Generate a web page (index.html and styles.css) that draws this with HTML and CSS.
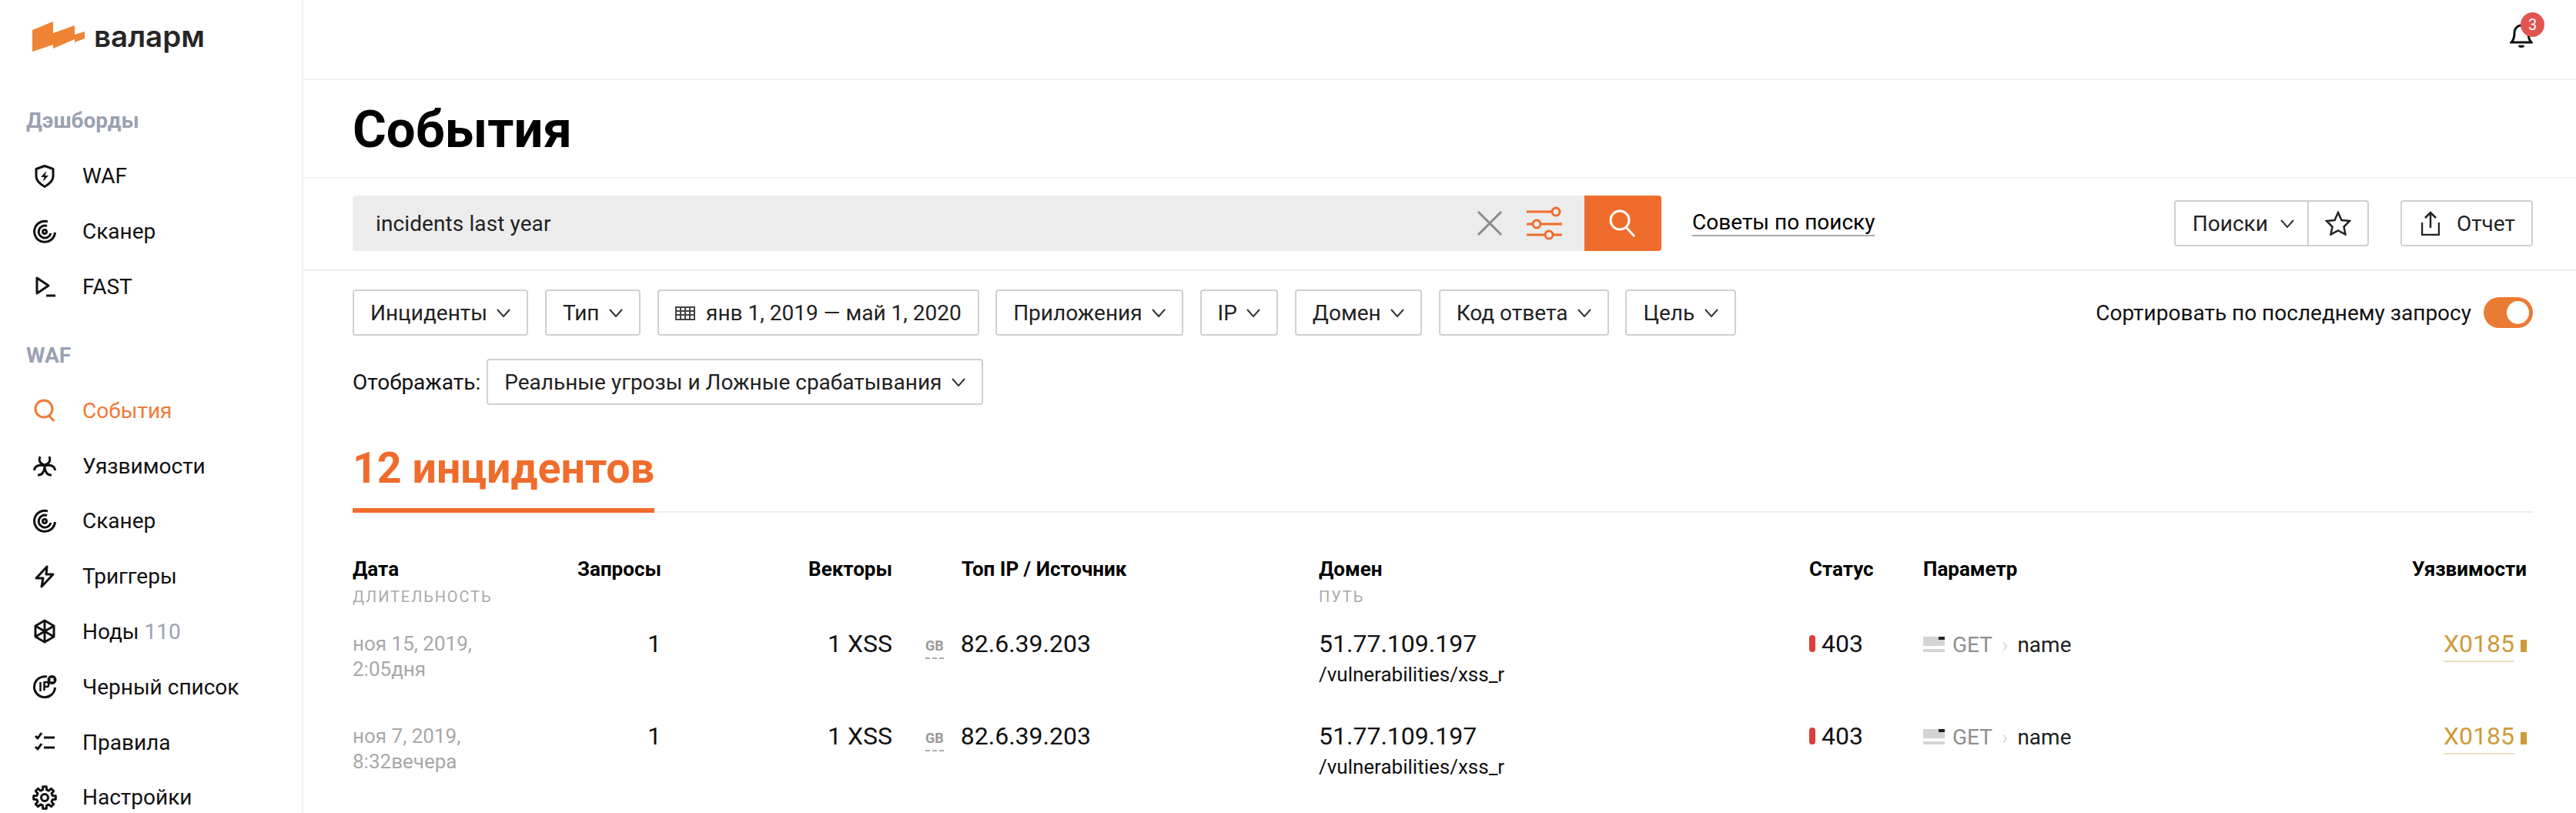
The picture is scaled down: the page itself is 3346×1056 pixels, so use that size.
FILE: index.html
```html
<!DOCTYPE html>
<html lang="ru">
<head>
    <meta charset="UTF-8">
    <title>События</title>
    <link rel="stylesheet" href="styles.css">
</head>
<body>
    <aside class="sidebar">
        <div class="logo">
            <svg class="logo-mark" width="68" height="39" viewBox="0 0 68 39"><path d="M0 11 27 0V15L55 5V17L68 13V22L55 27V23L27 35V30L0 39Z" fill="#ee8434"/></svg>
            <span class="logo-text">валарм</span>
        </div>

        <div class="nav-title nav-title-first">Дэшборды</div>
        <a class="nav-item">
            <svg class="nav-icon" viewBox="0 0 32 32"><path d="M16 2.500 27 6.500V16C27 22 22 26 16 29.500 10 26 5 22 5 16V6.500Z"/><path class="solid" d="M18.500 9 11 17H15.500L13.500 23 21 15H16.500Z"/></svg>
            <span>WAF</span>
        </a>
        <a class="nav-item">
            <svg class="nav-icon" viewBox="0 0 32 32"><path d="M20 2.900A13.500 13.500 0 1 0 29.500 17"/><path d="M24 18A8 8 0 1 1 19 8.500"/><circle cx="16" cy="16" r="2.500"/></svg>
            <span>Сканер</span>
        </a>
        <a class="nav-item">
            <svg class="nav-icon" viewBox="0 0 32 32"><path d="M6 5V25L21 15Z"/><path d="M18 28H30"/></svg>
            <span>FAST</span>
        </a>

        <div class="nav-title">WAF</div>
        <a class="nav-item active">
            <svg class="nav-icon" viewBox="0 0 32 32"><circle cx="15" cy="14" r="11"/><path d="M22 23 28 30"/></svg>
            <span>События</span>
        </a>
        <a class="nav-item">
            <svg class="nav-icon" viewBox="0 0 32 32"><path d="M10 4C8 9 10 14 16 15 22 14 24 9 22 4"/><path d="M2.500 22C3 16 9 14 16 16 23 14 29 16 29.500 22"/><path d="M7 28C12 28.500 15 25 16 18 17 25 20 28.500 25 28"/></svg>
            <span>Уязвимости</span>
        </a>
        <a class="nav-item">
            <svg class="nav-icon" viewBox="0 0 32 32"><path d="M20 2.900A13.500 13.500 0 1 0 29.500 17"/><path d="M24 18A8 8 0 1 1 19 8.500"/><circle cx="16" cy="16" r="2.500"/></svg>
            <span>Сканер</span>
        </a>
        <a class="nav-item">
            <svg class="nav-icon" viewBox="0 0 32 32"><path d="M19 3 5 18H14L12 29 27 13H18Z"/></svg>
            <span>Триггеры</span>
        </a>
        <a class="nav-item">
            <svg class="nav-icon" viewBox="0 0 32 32"><path d="M16 2 28 9V23L16 30 4 23V9Z"/><path d="M16 2V30M4 9 28 23M28 9 4 23"/></svg>
            <span>Ноды <span class="nav-count">110</span></span>
        </a>
        <a class="nav-item">
            <svg class="nav-icon" viewBox="0 0 32 32"><path d="M19 3A13.500 13.500 0 1 0 29.500 17"/><path class="thin" d="M10.500 10V22M15.500 21V10H19C22 10 22 16 19 16H15.500"/><circle class="solid" cx="25.500" cy="7" r="6"/><path class="cross" d="M23.500 5 27.500 9M27.500 5 23.500 9"/></svg>
            <span>Черный список</span>
        </a>
        <a class="nav-item">
            <svg class="nav-icon" viewBox="0 0 32 32"><path d="M4 8 7 11 12 4M4 22 7 25 12 18M15 10H29M15 23H29"/></svg>
            <span>Правила</span>
        </a>
        <a class="nav-item">
            <svg class="nav-icon" viewBox="0 0 32 32"><circle cx="16" cy="16" r="4.500"/><path d="M13.460 5.810 13.730 1.680H18.270L18.540 5.810 21.410 7 24.520 4.270 27.730 7.480 25 10.590 26.190 13.460 30.320 13.730V18.270L26.190 18.540 25 21.410 27.730 24.520 24.520 27.730 21.410 25 18.540 26.190 18.270 30.320H13.730L13.460 26.190 10.590 25 7.480 27.730 4.270 24.520 7 21.410 5.810 18.540 1.680 18.270V13.730L5.810 13.460 7 10.590 4.270 7.480 7.480 4.270 10.590 7Z"/></svg>
            <span>Настройки</span>
        </a>
    </aside>

    <main class="main">
        <header class="topbar">
            <div class="bell">
                <svg width="30" height="32" viewBox="0 0 30 32" fill="none" stroke="#111" stroke-width="3"><path d="M2 25C6 21 6 17 6 13 6 7 10 3 15 3 20 3 24 7 24 13 24 17 24 21 28 25Z"/><path d="M12 29C13 31 17 31 18 29"/></svg>
                <span class="bell-badge">3</span>
            </div>
        </header>

        <div class="title-row">
            <h1 class="page-title">События</h1>
        </div>

        <div class="search-row">
            <div class="search">
                <span class="search-text">incidents last year</span>
                <svg class="search-clear" width="34" height="34" viewBox="0 0 34 34"><path d="M2 2 32 32M32 2 2 32" stroke="#8a8a8a" stroke-width="3"/></svg>
                <svg class="search-sliders" width="46" height="44" viewBox="0 0 46 44" fill="#ececec" stroke="#f06c2c" stroke-width="3"><path d="M0 7H32M0 23H8M18 23H46M0 37H24M34 37H46"/><circle cx="38" cy="7" r="5"/><circle cx="13" cy="23" r="5"/><circle cx="29" cy="37" r="5"/></svg>
                <button class="search-btn">
                    <svg width="38" height="36" viewBox="0 0 38 36" fill="none" stroke="#fff" stroke-width="3"><circle cx="15" cy="14" r="12"/><path d="M23 23 34 35"/></svg>
                </button>
            </div>
            <a class="search-tips">Советы по поиску</a>
            <div class="search-actions">
                <div class="btn-group">
                    <button class="btn btn-searches">Поиски <svg class="chevron" width="18" height="11" viewBox="0 0 18 11"><path d="M1 1 9 10 17 1"/></svg></button>
                    <button class="btn btn-star">
                        <svg width="34" height="32" viewBox="0 0 34 32" fill="none" stroke="#222" stroke-width="2.500"><path d="M17 2 21.500 12 32 13 24.500 20.500 26.500 30.500 17 25.500 7.500 30.500 9.500 20.500 2 13 12.500 12Z"/></svg>
                    </button>
                </div>
                <button class="btn btn-report">
                    <svg width="24" height="32" viewBox="0 0 24 32" fill="none" stroke="#222" stroke-width="2.500"><path d="M12 22V2M5 9 12 2 19 9M1 15V31H23V15"/></svg>
                    Отчет
                </button>
            </div>
        </div>

        <div class="filters">
            <div class="filter-line">
                <button class="btn">Инциденты <svg class="chevron" width="18" height="11" viewBox="0 0 18 11"><path d="M1 1 9 10 17 1"/></svg></button>
                <button class="btn">Тип <svg class="chevron" width="18" height="11" viewBox="0 0 18 11"><path d="M1 1 9 10 17 1"/></svg></button>
                <button class="btn">
                    <svg class="cal" width="26" height="20" viewBox="0 0 26 20" fill="none" stroke="#444" stroke-width="2"><path d="M1 3H25V19H1ZM1 8H25M1 13H25M7 3V19M13 3V19M19 3V19"/></svg>
                    янв 1, 2019 — май 1, 2020
                </button>
                <button class="btn">Приложения <svg class="chevron" width="18" height="11" viewBox="0 0 18 11"><path d="M1 1 9 10 17 1"/></svg></button>
                <button class="btn">IP <svg class="chevron" width="18" height="11" viewBox="0 0 18 11"><path d="M1 1 9 10 17 1"/></svg></button>
                <button class="btn">Домен <svg class="chevron" width="18" height="11" viewBox="0 0 18 11"><path d="M1 1 9 10 17 1"/></svg></button>
                <button class="btn">Код ответа <svg class="chevron" width="18" height="11" viewBox="0 0 18 11"><path d="M1 1 9 10 17 1"/></svg></button>
                <button class="btn">Цель <svg class="chevron" width="18" height="11" viewBox="0 0 18 11"><path d="M1 1 9 10 17 1"/></svg></button>
                <div class="sort">
                    Сортировать по последнему запросу
                    <span class="toggle"><span class="toggle-knob"></span></span>
                </div>
            </div>
            <div class="filter-line filter-show">
                <span class="show-label">Отображать:</span>
                <button class="btn">Реальные угрозы и Ложные срабатывания <svg class="chevron" width="18" height="11" viewBox="0 0 18 11"><path d="M1 1 9 10 17 1"/></svg></button>
            </div>
        </div>

        <div class="tabs">
            <div class="tab">12 инцидентов</div>
        </div>

        <div class="table">
            <div class="row head">
                <div><b>Дата</b><small>ДЛИТЕЛЬНОСТЬ</small></div>
                <div class="right"><b>Запросы</b></div>
                <div class="right"><b>Векторы</b></div>
                <div class="ip-head"><b>Топ IP / Источник</b></div>
                <div><b>Домен</b><small>ПУТЬ</small></div>
                <div><b>Статус</b></div>
                <div><b>Параметр</b></div>
                <div class="right"><b>Уязвимости</b></div>
            </div>

            <div class="row">
                <div class="date">ноя 15, 2019,<br>2:05дня</div>
                <div class="right big">1</div>
                <div class="right big">1 XSS</div>
                <div class="source"><span class="country">GB</span><span class="big">82.6.39.203</span></div>
                <div><div class="big">51.77.109.197</div><div class="path">/vulnerabilities/xss_r</div></div>
                <div class="status big">403</div>
                <div class="param"><span class="flag"><i></i></span><span class="method">GET</span><span class="arrow">›</span><span>name</span></div>
                <div class="right"><span class="vuln">X0185</span><span class="vuln-bar"></span></div>
            </div>

            <div class="row">
                <div class="date">ноя 7, 2019,<br>8:32вечера</div>
                <div class="right big">1</div>
                <div class="right big">1 XSS</div>
                <div class="source"><span class="country">GB</span><span class="big">82.6.39.203</span></div>
                <div><div class="big">51.77.109.197</div><div class="path">/vulnerabilities/xss_r</div></div>
                <div class="status big">403</div>
                <div class="param"><span class="flag"><i></i></span><span class="method">GET</span><span class="arrow">›</span><span>name</span></div>
                <div class="right"><span class="vuln">X0185</span><span class="vuln-bar"></span></div>
            </div>
        </div>
    </main>
</body>
</html>
```

FILE: styles.css
```css
* {
    box-sizing: border-box;
}

body {
    margin: 0;
    height: 100vh;
    overflow: hidden;
    display: flex;
    background: #fff;
    color: #111;
    font-family: Roboto, sans-serif;
    font-size: 28px;
}

/* sidebar */
.sidebar {
    width: 394px;
    flex-shrink: 0;
    border-right: 2px solid #f2f2f2;
    overflow: hidden;
}

.logo {
    display: flex;
    align-items: center;
    height: 94px;
    padding-left: 42px;
    gap: 12px;
}

.logo-text {
    font-family: Inter, sans-serif;
    font-size: 38.500px;
    font-weight: 600;
    color: #262626;
    line-height: 1;
}

.nav-title {
    padding-left: 34px;
    height: 40px;
    margin-top: 34px;
    margin-bottom: 15px;
    line-height: 40px;
    font-weight: 700;
    color: #9aa1b1;
}

.nav-title-first {
    margin-top: 43px;
    margin-bottom: 16px;
}

.nav-item {
    display: flex;
    align-items: center;
    height: 71.800px;
    padding-left: 42px;
    color: #111;
}

.nav-item.active {
    color: #f07a35;
}

.nav-icon {
    width: 32px;
    height: 32px;
    margin-right: 33px;
    flex-shrink: 0;
    fill: none;
    stroke: currentColor;
    stroke-width: 3;
    stroke-linejoin: round;
}

.nav-icon .thin {
    stroke-width: 2.500;
}

.nav-icon .solid {
    fill: currentColor;
    stroke: none;
}

.nav-icon .cross {
    stroke: #fff;
    stroke-width: 2;
}

.nav-count {
    color: #9aa1b1;
}

/* main column */
.main {
    flex: 1;
    min-width: 0;
}

.topbar {
    height: 104px;
    border-bottom: 2px solid #f2f2f2;
    display: flex;
    justify-content: flex-end;
    padding: 30px 56px 0 0;
}

.bell {
    position: relative;
    width: 30px;
    height: 32px;
}

.bell-badge {
    position: absolute;
    top: -14px;
    left: 14px;
    width: 31px;
    height: 32px;
    border-radius: 50%;
    background: #e25450;
    color: #fff;
    font-size: 20px;
    line-height: 32px;
    text-align: center;
}

.title-row {
    height: 128px;
    border-bottom: 2px solid #f2f2f2;
    padding: 2px 0 0 64px;
    display: flex;
    align-items: center;
}

.page-title {
    margin: 0;
    font-size: 67px;
    font-weight: 700;
    color: #000;
}

.search-row {
    height: 120px;
    border-bottom: 2px solid #f0eeec;
    padding: 22px 56px 0 64px;
    display: flex;
    align-items: flex-start;
}

.search {
    width: 1700px;
    height: 72px;
    background: #ececec;
    border-radius: 4px;
    display: flex;
    align-items: center;
    padding-left: 30px;
    overflow: hidden;
}

.search-text {
    flex: 1;
    font-size: 28px;
    letter-spacing: 0.100px;
    color: #222;
}

.search-clear {
    margin-right: 31px;
}

.search-sliders {
    margin-right: 29px;
}

.search-btn {
    width: 100px;
    height: 72px;
    border: none;
    background: #f06c2c;
    display: flex;
    align-items: center;
    justify-content: center;
}

.search-tips {
    margin: 18px 0 0 40px;
    height: 35px;
    line-height: 33px;
    border-bottom: 2px solid #aaa;
    color: #000;
}

.search-actions {
    margin-left: auto;
    margin-top: 6px;
    display: flex;
    gap: 41px;
}

.btn-group {
    display: flex;
}

.btn {
    height: 60px;
    padding: 0 21px;
    display: flex;
    align-items: center;
    gap: 12.500px;
    background: #fff;
    border: 2px solid #d0d0d0;
    border-radius: 4px;
    font-family: inherit;
    font-size: 28px;
    color: #222;
    white-space: nowrap;
}

.btn-searches {
    border-radius: 4px 0 0 4px;
    border-right: none;
    padding: 0 17px 0 22px;
    gap: 16px;
}

.btn-star {
    border-radius: 0 4px 4px 0;
    padding: 0 21px;
}

.btn-report {
    padding: 0 21px 0 25px;
    gap: 22px;
}

.chevron {
    fill: none;
    stroke: #333;
    stroke-width: 2;
}

.cal {
    margin-right: 2px;
}

/* filters */
.filters {
    padding: 24px 56px 0 64px;
}

.filter-line {
    display: flex;
    align-items: center;
    gap: 21.500px;
}

.filter-show {
    margin-top: 30px;
    gap: 8px;
}

.sort {
    margin-left: auto;
    display: flex;
    align-items: center;
    gap: 16px;
    color: #111;
    white-space: nowrap;
}

.toggle {
    width: 64px;
    height: 40px;
    border-radius: 20px;
    background: #ea7b33;
    display: flex;
    justify-content: flex-end;
    align-items: center;
    padding-right: 5px;
}

.toggle-knob {
    width: 29px;
    height: 30px;
    border-radius: 50%;
    background: #fff;
}

/* counter tab */
.tabs {
    margin: 30px 56px 0 64px;
    border-bottom: 2px solid #f0eeec;
    height: 110px;
    display: flex;
    align-items: flex-end;
}

.tab {
    height: 116px;
    margin-bottom: -2px;
    padding-top: 26px;
    border-bottom: 6px solid #f06c2c;
    font-size: 55.500px;
    font-weight: 700;
    color: #f06c2c;
    line-height: 66px;
}

/* table */
.table {
    padding: 58px 64px 0 64px;
}

.row {
    display: grid;
    grid-template-columns: 242px 159px 300px 554px 637px 148px 1fr 300px;
    height: 120px;
    color: #111;
}

.row.head {
    height: 92px;
    font-size: 26px;
    color: #000;
}

.head b {
    display: block;
    font-weight: 700;
    line-height: 30px;
}

.head small {
    display: block;
    margin-top: 8px;
    font-size: 20px;
    letter-spacing: 1.900px;
    line-height: 26px;
    color: #aaa;
}

.right {
    text-align: right;
}

.ip-head {
    padding-left: 90px;
}

.big {
    font-size: 32px;
    line-height: 40px;
}

.date {
    font-size: 26px;
    line-height: 33px;
    color: #a8a8a8;
    padding-top: 4px;
}

.source {
    padding-left: 43px;
    display: flex;
    align-items: flex-start;
    gap: 22px;
}

.country {
    font-size: 18px;
    font-weight: 700;
    color: #999;
    line-height: 22px;
    padding-bottom: 4px;
    margin-top: 12px;
    border-bottom: 2px dashed #aaa;
}

.path {
    font-size: 26px;
    line-height: 34px;
    margin-top: 3px;
}

.status {
    display: flex;
    gap: 8px;
}

.status::before {
    content: "";
    width: 8px;
    height: 22px;
    margin-top: 9px;
    border-radius: 4px;
    background: #de3f3b;
}

.param {
    display: flex;
    align-items: center;
    height: 40px;
    font-size: 28px;
    color: #222;
    padding-top: 2px;
}

.flag {
    position: relative;
    width: 28px;
    height: 20px;
    margin-right: 10px;
    border-bottom: 4px solid #d4d4d4;
    background: linear-gradient(#d4d4d4 12px, #fff 12px);
}

.flag i {
    position: absolute;
    top: 0;
    right: 0;
    width: 8px;
    height: 4px;
    background: #222;
}

.method {
    color: #8f8f8f;
}

.arrow {
    color: #ddd;
    margin: 0 12px;
}

.vuln {
    display: inline-block;
    font-size: 32px;
    line-height: 40px;
    padding-bottom: 2px;
    color: #cf9a3b;
    border-bottom: 2px solid #ecdfbf;
}

.vuln-bar {
    display: inline-block;
    width: 8px;
    height: 16px;
    margin-left: 8px;
    background: #cf9a3b;
}
```
